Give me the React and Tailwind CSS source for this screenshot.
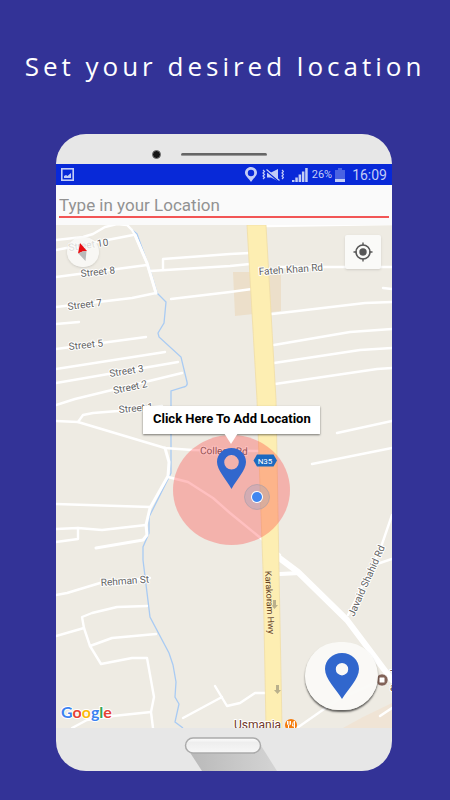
import React, { useState } from 'react';

// Minor roads, drawn as plain white lines
const roads = [
    'M0 15 27 12 37 9 49 2 61 -1 71 0 76 5 79 10 91 38 100 68',
    'M0 25 77 10',
    'M0 52 91 40',
    'M0 82 76 73 100 68',
    'M0 99 23 97',
    'M0 124 90 112',
    'M0 144 109 127',
    'M0 158 122 137',
    'M0 180 19 174 126 148',
    'M94 46 174 41 194 39',
    'M107 45V34L174 29 194 28',
    'M115 74 174 67 196 64',
    'M211 1 336 -1',
    'M225 42 336 42',
    'M327 63 336 64',
    'M216 89 309 78 336 77',
    'M218 120 294 107 336 104',
    'M218 138 304 125 336 123',
    'M219 159 321 144 336 143',
    'M281 208 336 196',
    'M256 239 336 223',
    'M336 290 324 325 292 390',
    'M321 339 336 334',
    'M22 197 27 190 37 188 62 186 106 181',
    'M0 196 22 197 109 223 136 225 204 226',
    'M0 279 94 282',
    'M0 304 22 303 46 305 90 300',
    'M22 303V314L0 317',
    'M112 252 132 257 157 273 174 288 207 315 224 330',
    'M0 370 11 368 44 358 94 353',
    'M91 381 61 382 36 388 26 392 28 403 34 421 45 439 76 433 91 433 98 472 95 487 97 503',
    'M0 411 28 403',
    'M34 421 56 413 100 409',
    'M95 487 57 491 31 495 16 503',
    'M127 493 166 472',
    'M159 461 171 481 184 478 199 468 210 468',
    'M241 503 281 475 321 457',
    'M324 491 336 483',
];

const labels = [
    { text: 'Street 10', x: 13, y: 26, angle: -8 },
    { text: 'Street 8', x: 25, y: 52, angle: -6 },
    { text: 'Street 7', x: 12, y: 85, angle: -7 },
    { text: 'Street 5', x: 13, y: 125, angle: -6 },
    { text: 'Street 3', x: 54, y: 152, angle: -9 },
    { text: 'Street 2', x: 58, y: 169, angle: -12 },
    { text: 'Street 1', x: 63, y: 188, angle: -5 },
    { text: 'Fateh Khan Rd', x: 203, y: 50, angle: -4 },
    { text: 'College Rd', x: 144, y: 229, angle: 1 },
    { text: 'Rehman St', x: 45, y: 361, angle: -4 },
    { text: 'Javaid Shahid Rd', x: 298, y: 392, angle: -66 },
];

const StreetMap = () => (
    <svg viewBox="0 0 336 503" className="block w-full bg-[#eeebe3]" role="img" aria-label="Map">
        <path d="M177 47H225V86L179 91Z" fill="#ecdfca" />
        <path d="M287 503 307 492 336 478V503Z" fill="#f0e4d5" />

        {/* River */}
        <path
            d="M74 3 81 9 94 45 101 68 110 77 108 98 102 108 103 112 125 132 131 157Q132 161 128 162L115 166V248L93 292V308L87 322V335L94 392 113 428 117 440 120 457 119 472 123 479 119 497 127 503"
            fill="none"
            stroke="#a9cbf3"
            strokeWidth="1.3"
        />

        <g fill="none" stroke="#fff" strokeLinejoin="round" strokeLinecap="round" strokeWidth="2.4">
            {roads.map((d) => (
                <path key={d} d={d} />
            ))}
            <path d="M109 223 113 237 112 251 94 283 90 300 91 310 87 315 40 323" strokeWidth="3" />
            <path d="M79 10 91 38 100 68" strokeWidth="3" />
            <path d="M222 332 242 347 291 395 336 455" strokeWidth="6" />
            <path d="M224 349 244 348" strokeWidth="4" />
        </g>

        {/* Highway */}
        <path
            d="M191 0H210L220 175 223 345 226 503H210L207 345 201 175Z"
            fill="#fdeeb2"
            stroke="#f0dda6"
            strokeWidth="0.8"
        />
        <path
            d="M217 375h3v5h2l-3.500 4-3.500-4h2zM220 460h3v5h2l-3.500 4-3.500-4h2z"
            fill="#b9b08c"
        />

        <g
            fontFamily="Roboto, sans-serif"
            fontSize="10"
            fill="#636363"
            stroke="#fff"
            strokeWidth="2"
            strokeLinejoin="round"
            paintOrder="stroke"
        >
            {labels.map(({ text, x, y, angle }) => (
                <text key={text} x={x} y={y} transform={`rotate(${angle} ${x} ${y})`}>
                    {text}
                </text>
            ))}
            <text x="209" y="346" transform="rotate(87 209 346)" fontSize="9" fill="#65401f" stroke="#fdf0bd">
                Karakoram Hwy
            </text>
            <text x="178" y="504" fontSize="12" fill="#70382a">
                Usmania
            </text>
            <text x="334" y="453" fontSize="11" fill="#4b332c">
                T
            </text>
            <text x="334" y="466" fontSize="11" fill="#4b332c">
                a
            </text>
        </g>

        {/* Restaurant and shop */}
        <circle cx="235" cy="500" r="6" fill="#f57c0c" />
        <path
            d="M231.500 496v3q0 1 1 1v4M233 496v3.500M234.500 496v3q0 1-1 1M238.500 504v-8q-2 1-2 5h2"
            fill="none"
            stroke="#fff"
            strokeWidth="1"
        />
        <circle cx="326" cy="455" r="6" fill="#826358" stroke="#fff" strokeWidth="0.500" />
        <rect x="323.500" y="452.500" width="5" height="5" rx="0.500" fill="#fff" />

        {/* Search radius */}
        <ellipse cx="175.500" cy="265" rx="58.500" ry="55" fill="#ff2d2d" fillOpacity="0.3" />

        <path d="M197.500 235.500 201 229.500h16.500l3.500 6-3.500 6H201z" fill="#1b6ac0" />
        <text
            x="209"
            y="239"
            textAnchor="middle"
            fontFamily="Roboto, sans-serif"
            fontSize="8"
            fill="#fff"
        >
            N35
        </text>

        {/* Current position */}
        <circle cx="201" cy="272" r="12.500" fill="#8ba0c4" fillOpacity="0.3" stroke="#a59ca8" strokeWidth="0.600" />
        <circle cx="201" cy="272" r="6" fill="#fff" />
        <circle cx="201" cy="272" r="5" fill="#3f86f0" />

        {/* Selected place */}
        <path
            fillRule="evenodd"
            fill="#3167cd"
            d="M175.500 223c-8 0-14.500 6-14.500 14 0 8 9 17 14.500 27 5.500-10 14.500-19 14.500-27 0-8-6.500-14-14.500-14zm0 7a7.300 7.300 0 1 1 0 14.600 7.300 7.300 0 0 1 0-14.600z"
        />

        <text
            x="5"
            y="493"
            fontFamily="Lato, sans-serif"
            fontSize="16"
            fontWeight="700"
            stroke="#fff"
            strokeWidth="2"
            strokeLinejoin="round"
            paintOrder="stroke"
        >
            <tspan fill="#3b82f0">G</tspan>
            <tspan fill="#e64235">o</tspan>
            <tspan fill="#fbb90c">o</tspan>
            <tspan fill="#3b82f0">g</tspan>
            <tspan fill="#33a651">l</tspan>
            <tspan fill="#e64235">e</tspan>
        </text>
    </svg>
);

const StatusBar = () => (
    <div className="flex h-[21px] items-center bg-[#0829d8] px-[5px] text-[#c3cdf6]">
        <svg viewBox="0 0 13 13" className="h-[13px] w-[13px]" aria-hidden="true">
            <rect x="0.800" y="0.800" width="11.400" height="11.400" fill="none" stroke="currentColor" strokeWidth="1.600" />
            <path d="M3 10V8l2-1 1.500 1L10 5v5z" fill="currentColor" />
        </svg>
        <div className="ml-auto flex items-center">
            <svg viewBox="0 0 12 15" className="h-[15px] w-3" aria-hidden="true">
                <path
                    fillRule="evenodd"
                    fill="currentColor"
                    d="M6 0C2.700 0 0 2.500 0 5.800 0 9 3.500 11 6 15c2.500-4 6-6 6-9.200C12 2.500 9.300 0 6 0zm0 2.800a3.200 3.200 0 1 1 0 6.400 3.200 3.200 0 0 1 0-6.400z"
                />
            </svg>
            <svg viewBox="0 0 22 14" className="ml-[5px] h-3.5 w-[22px]" aria-hidden="true">
                <path d="M5 4.500h4L16 1v12L9 9.500H5z" fill="currentColor" />
                <path d="m4.500 3 13 11" stroke="#0829d8" strokeWidth="1.500" />
                <path
                    d="m4.500 1.500 13 11M1 2l1.500 1.500L1 5l1.500 1.500L1 8l1.500 1.500L1 11M20 2l1.500 1.500L20 5l1.500 1.500L20 8l1.500 1.500L20 11"
                    fill="none"
                    stroke="currentColor"
                    strokeWidth="1.200"
                />
            </svg>
            <svg viewBox="0 0 16 14" className="ml-2 h-3.5 w-4" aria-hidden="true">
                <path d="M0 12h2.500v2H0zM3.300 9.500h2.500V14H3.300zM6.600 6.500h2.500V14H6.600zM9.900 3.500h2.500V14H9.900zM13.200 0h2.500v14h-2.500z" fill="currentColor" />
            </svg>
            <span className="ml-1 text-[11px] leading-5">26%</span>
            <svg viewBox="0 0 10 14" className="ml-[3px] h-3.5 w-2.5" aria-hidden="true">
                <path d="M3 0h4v2h3v9H0V2h3z" fill="#4a63e2" />
                <path d="M0 11h10v3H0z" fill="currentColor" />
            </svg>
            <span className="ml-[7px] text-[14px] leading-5">16:09</span>
        </div>
    </div>
);

const App = () => {
    const [place, setPlace] = useState('');

    return (
        <main className="min-h-screen bg-[#333397] pb-[29px] font-[Roboto,sans-serif]">
            <h1 className="pt-12 text-center font-['Open_Sans',sans-serif] text-[26px] leading-9 tracking-[4px] text-white">
                Set your desired location
            </h1>

            <div className="ml-14 mr-[58px] mt-[50px] overflow-hidden rounded-[30px] bg-[#e7e7e7]">
                {/* Camera and speaker */}
                <div className="flex h-[30px] items-center justify-center gap-5 pr-[30px] pt-[10px]">
                    <span className="h-[9px] w-[9px] rounded-full border border-[#777] bg-[#151515]" />
                    <span className="h-[3px] w-[86px] rounded-full border-b border-[#999] bg-[#666]" />
                </div>

                <StatusBar />

                <div className="bg-[#fafafa] px-[3px] pb-[7px] pt-[9px]">
                    <input
                        type="text"
                        aria-label="Location"
                        placeholder="Type in your Location"
                        className="block h-6 w-full border-b-2 border-[#f25555] bg-transparent text-[17px] leading-5 text-gray-800 placeholder-[#929292] outline-none"
                        value={place}
                        onChange={(e) => setPlace(e.target.value)}
                    />
                </div>

                <div className="relative">
                    <StreetMap />

                    <button
                        type="button"
                        aria-label="Reset north"
                        className="absolute left-[11px] top-3 flex h-[30px] w-8 items-center justify-center rounded-full bg-[#fafaf8]/80 shadow"
                    >
                        <svg viewBox="0 0 12 20" className="h-5 w-3">
                            <path d="M3 1 1 11.500 5.500 9.500 10 9z" fill="#e80d12" />
                            <path d="M1.500 11.500 5.500 9.500 9.500 9 8.500 19z" fill="#b9b9b9" />
                        </svg>
                    </button>

                    <button
                        type="button"
                        aria-label="My location"
                        className="absolute right-[11px] top-2.5 flex h-[34px] w-9 items-center justify-center rounded-[2px] bg-[#fafaf8] shadow"
                    >
                        <svg viewBox="0 0 20 20" className="h-5 w-5" stroke="#575757" fill="none">
                            <circle cx="10" cy="10" r="7" strokeWidth="1.600" />
                            <circle cx="10" cy="10" r="3.700" fill="#575757" stroke="none" />
                            <path d="M10 0.500v3M10 16.500v3M0.500 10h3M16.500 10h3" strokeWidth="1.400" />
                        </svg>
                    </button>

                    <button
                        type="button"
                        className="absolute left-[26%] top-[36%] h-7 w-[177px] whitespace-nowrap bg-white pb-0.5 text-center text-[13px] font-bold leading-6 text-black shadow-[0_1px_2px_rgba(0,0,0,0.5)]"
                    >
                        Click Here To Add Location
                        <svg viewBox="0 0 14 12" className="absolute left-[81px] top-[27px] h-3 w-3.5" aria-hidden="true">
                            <path d="M0 0h14L7 11z" fill="#fff" />
                        </svg>
                    </button>

                    <button
                        type="button"
                        aria-label="Save location"
                        className="absolute bottom-[18px] right-3.5 flex h-[68px] w-[73px] items-center justify-center rounded-full bg-[#fafaf7]/95 shadow-[0_2px_2px_rgba(0,0,0,0.6)]"
                    >
                        <svg viewBox="0 0 34 46" className="h-[46px] w-[34px]">
                            <path
                                fillRule="evenodd"
                                fill="#3167cd"
                                d="M17 0C7.500 0 0 7 0 16c0 10 11 20 17 30 6-10 17-20 17-30C34 7 26.500 0 17 0zm0 10a6.200 6.200 0 1 1 0 12.400A6.200 6.200 0 0 1 17 10z"
                            />
                        </svg>
                    </button>
                </div>

                {/* Home button with its long shadow */}
                <div className="flex h-[43px] justify-center">
                    <svg viewBox="0 0 110 43" className="h-[43px] w-[110px]">
                        <defs>
                            <linearGradient id="long-shadow" x1="0" y1="0" x2="1" y2="0">
                                <stop offset="0" stopColor="#b9b9b9" />
                                <stop offset="1" stopColor="#d4d4d4" />
                            </linearGradient>
                            <linearGradient id="home" x1="0" y1="0" x2="0" y2="1">
                                <stop offset="0" stopColor="#fff" />
                                <stop offset="0.300" stopColor="#eee" />
                                <stop offset="1" stopColor="#f7f7f7" />
                            </linearGradient>
                        </defs>
                        <path d="M20 23 91 16 108 43H33z" fill="url(#long-shadow)" />
                        <rect x="16.500" y="10" width="75" height="15" rx="7.500" fill="url(#home)" stroke="#ababab" strokeWidth="1.500" />
                    </svg>
                </div>
            </div>
        </main>
    );
};

export default App;
